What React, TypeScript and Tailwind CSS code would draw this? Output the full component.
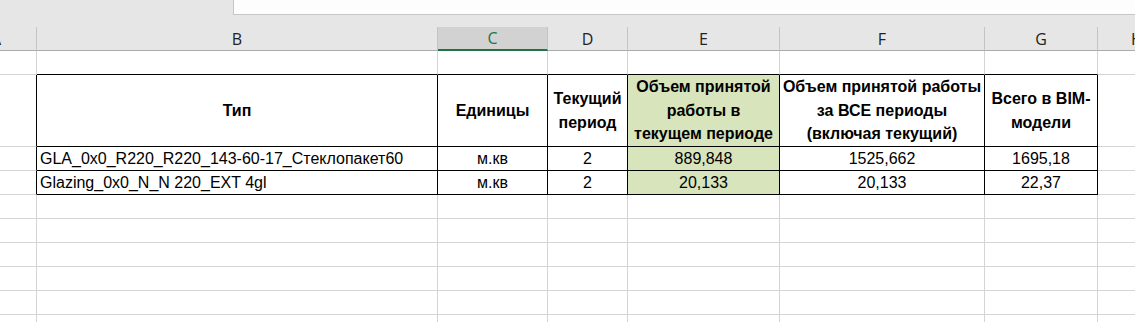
import React from 'react';

// column widths incl. the 1px right gridline
const W = ['w-[37px]', 'w-[401px]', 'w-[110px]', 'w-[80px]', 'w-[152px]', 'w-[205px]', 'w-[113px]', 'flex-1'];
const LETTERS = ['A', 'B', 'C', 'D', 'E', 'F', 'G', 'H'];

const GRID = 'border-[#d4d4d4]';

function ColHeader() {
  return (
    <div className="flex h-[24px] bg-[#e6e6e6] text-[16px] text-[#222]" style={{ fontFamily: '"Open Sans", "Noto Sans", sans-serif' }}>
      {LETTERS.map((l, i) => {
        const sel = l === 'C';
        return (
          <div
            key={l}
            className={`${W[i]} shrink-0 overflow-hidden flex items-center border-r border-[#c4c4c4] ${
              sel ? 'bg-[#d2d2d2] border-b-2 border-b-[#217346] text-[#217346]' : 'border-b border-b-[#ababab]'
            } ${i === 0 ? 'justify-start' : i === 7 ? 'justify-start border-r-0' : 'justify-center'}`}
          >
            <span className={i === 0 ? '-ml-[9px]' : i === 7 ? 'ml-[33px]' : ''}>{l}</span>
          </div>
        );
      })}
    </div>
  );
}

type Cell = { text?: React.ReactNode; align?: 'left' | 'center'; bold?: boolean; fill?: boolean };

function Row({ h, cells, kind }: { h: string; cells: Cell[]; kind: 'blank' | 'top' | 'table' }) {
  return (
    <div className={`flex ${h}`}>
      {W.map((w, i) => {
        const inTable = i >= 1 && i <= 6;
        let br = GRID;
        let bb = GRID;
        if (kind === 'top' && inTable) bb = 'border-b-black';
        if (kind === 'table') {
          if (i <= 6) br = 'border-r-black';
          if (inTable) bb = 'border-b-black';
        }
        const c = cells[i] || {};
        return (
          <div
            key={i}
            className={`${w} shrink-0 border-b ${i < 7 ? 'border-r' : ''} ${GRID} ${br} ${bb} ${c.fill ? 'bg-[#d8e4bc]' : ''} flex items-center overflow-hidden whitespace-nowrap ${
              c.align === 'left' ? 'justify-start pl-[3px]' : 'justify-center text-center'
            } ${c.bold ? 'font-bold leading-[23.5px]' : ''}`}
          >
            {c.text}
          </div>
        );
      })}
    </div>
  );
}

export default function App() {
  return (
    <div
      className="w-[1135px] h-[322px] overflow-hidden bg-white text-black text-[16px]"
      style={{ fontFamily: '"Liberation Sans", Arial, sans-serif' }}
    >
      <div className="h-[27px] bg-[#e6e6e6] flex">
        <div className="w-[233px] shrink-0" />
        <div className="flex-1 h-[15px] bg-[#fdfdfd] border-l border-b border-[#c6c6c6]" />
      </div>
      <ColHeader />
      <Row h="h-[24px]" kind="top" cells={[]} />
      <Row
        h="h-[72px]"
        kind="table"
        cells={[
          {},
          { text: 'Тип', bold: true },
          { text: 'Единицы', bold: true },
          { text: <>Текущий<br />период</>, bold: true },
          { text: <>Объем принятой<br />работы в<br />текущем периоде</>, bold: true, fill: true },
          { text: <>Объем принятой работы<br />за ВСЕ периоды<br />(включая текущий)</>, bold: true },
          { text: <>Всего в BIM-<br />модели</>, bold: true },
        ]}
      />
      <Row
        h="h-[24px]"
        kind="table"
        cells={[
          {},
          { text: 'GLA_0x0_R220_R220_143-60-17_Стеклопакет60', align: 'left' },
          { text: 'м.кв' },
          { text: '2' },
          { text: '889,848', fill: true },
          { text: '1525,662' },
          { text: '1695,18' },
        ]}
      />
      <Row
        h="h-[24px]"
        kind="table"
        cells={[
          {},
          { text: 'Glazing_0x0_N_N 220_EXT 4gl', align: 'left' },
          { text: 'м.кв' },
          { text: '2' },
          { text: '20,133', fill: true },
          { text: '20,133' },
          { text: '22,37' },
        ]}
      />
      {[0, 1, 2, 3, 4, 5].map(k => (
        <Row key={k} h="h-[24px]" kind="blank" cells={[]} />
      ))}
    </div>
  );
}
